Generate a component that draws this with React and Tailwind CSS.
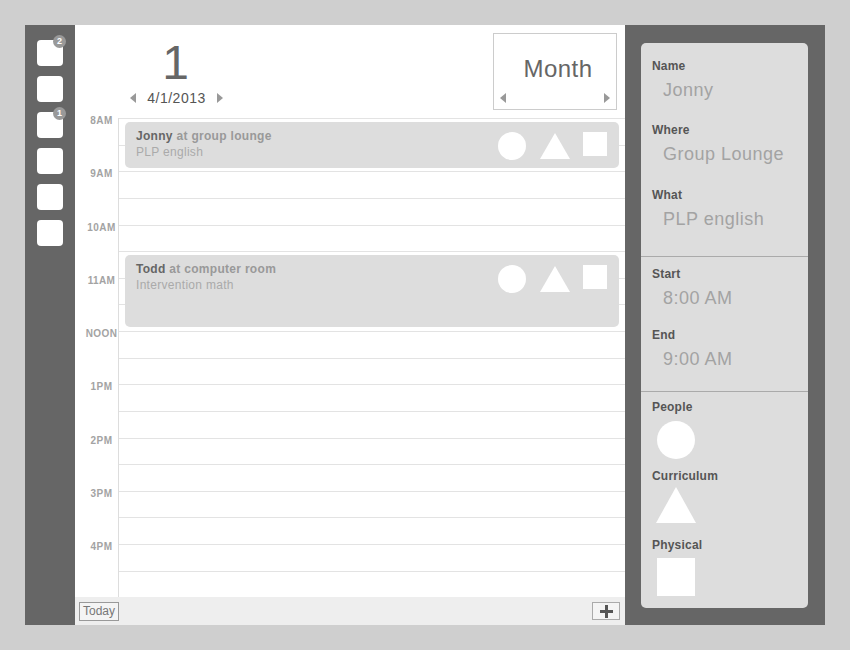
import React from 'react';

const hours = ['8AM', '9AM', '10AM', '11AM', 'NOON', '1PM', '2PM', '3PM', '4PM'];

function Tri({ dir = 'left', className = '' }) {
  return (
    <svg width="6" height="10" viewBox="0 0 6 10" className={className}>
      {dir === 'left'
        ? <polygon points="6,0 6,10 0,5" fill="#999" />
        : <polygon points="0,0 0,10 6,5" fill="#999" />}
    </svg>
  );
}

function Shapes() {
  return (
    <div className="flex items-start">
      <div className="w-[28px] h-[28px] rounded-full bg-white" />
      <svg width="30" height="26" viewBox="0 0 30 26" className="ml-[14px] mt-[1px]">
        <polygon points="15,0 30,26 0,26" fill="#fff" />
      </svg>
      <div className="w-[24px] h-[24px] bg-white ml-[13px]" />
    </div>
  );
}

function Event({ name, where, what, className }) {
  return (
    <div className={`absolute left-[50px] right-[6px] bg-[#dddddd] rounded-[5px] flex justify-between pl-[11px] pr-[12px] ${className}`}>
      <div className="pt-[6px] text-[12px] leading-[16px] tracking-[0.3px]">
        <div className="font-bold text-[#666]">
          {name} <span className="text-[#999]">at {where}</span>
        </div>
        <div className="text-[#aaa]">{what}</div>
      </div>
      <div className="pt-[10px]">
        <Shapes />
      </div>
    </div>
  );
}

function Field({ label, value, className = '' }) {
  return (
    <div className={className}>
      <div className="text-[12px] leading-[14px] font-bold text-[#555] tracking-[0.2px]">{label}</div>
      <div className="mt-[5px] pl-[11px] text-[18px] leading-[24px] text-[#a3a3a3] tracking-[0.5px]">{value}</div>
    </div>
  );
}

export default function App() {
  return (
    <div className="w-[850px] h-[650px] bg-[#cfcfcf] p-[25px]" style={{ fontFamily: '"Liberation Sans", Arial, sans-serif' }}>
      <div className="flex w-[800px] h-[600px]">
        {/* Left bar */}
        <div className="w-[50px] h-full bg-[#666666] flex flex-col items-center pt-[15px] gap-[10px]">
          {[2, 0, 1, 0, 0, 0].map((n, i) => (
            <div key={i} className="relative w-[26px] h-[26px] rounded-[4px] bg-white">
              {n > 0 && (
                <div className="absolute -top-[5px] -right-[3px] w-[13px] h-[13px] rounded-full bg-[#999] text-white text-[9px] leading-[13px] font-bold text-center">
                  {n}
                </div>
              )}
            </div>
          ))}
        </div>

        {/* Main calendar */}
        <div className="w-[550px] h-full bg-white flex flex-col">
          {/* Header */}
          <div className="h-[93px] flex">
            <div className="w-[44px]" />
            <div className="w-[112px] flex flex-col items-center">
              <div className="mt-[14px] ml-[1px] text-[48px] leading-[48px] text-[#666]">1</div>
              <div className="mt-[3px] ml-[3px] flex items-center gap-[11px]">
                <Tri dir="left" />
                <span className="text-[14px] leading-[16px] text-[#555] tracking-[0.5px]">4/1/2013</span>
                <Tri dir="right" />
              </div>
            </div>
            <div className="flex-1" />
            <div className="mt-[8px] mr-[8px] w-[124px] h-[77px] border border-[#cccccc] flex flex-col">
              <div className="pt-[21px] pl-[6px] text-center text-[24px] leading-[28px] text-[#666] tracking-[0.5px]">Month</div>
              <div className="mt-[10px] flex justify-between px-[6px]">
                <Tri dir="left" />
                <Tri dir="right" />
              </div>
            </div>
          </div>

          {/* Grid */}
          <div className="relative flex-1 flex flex-col">
            {hours.map((h) => (
              <div key={h} className="flex h-[53.25px]">
                <div className="w-[44px] border-r border-[#dddddd] relative">
                  <div className="absolute inset-x-0 pl-[10px] -top-[3px] text-center text-[10px] leading-[12px] font-bold text-[#a3a3a3] tracking-[0.4px]">
                    {h}
                  </div>
                </div>
                <div className="flex-1 border-t border-[#e3e3e3] flex flex-col">
                  <div className="flex-1 border-b border-[#e3e3e3]" />
                  <div className="flex-1" />
                </div>
              </div>
            ))}

            <Event name="Jonny" where="group lounge" what="PLP english" className="top-[4px] h-[46px]" />
            <Event name="Todd" where="computer room" what="Intervention math" className="top-[137px] h-[72px]" />
          </div>

          {/* Footer */}
          <div className="h-[27.75px] bg-[#eeeeee] flex items-center justify-between px-[4px]">
            <button className="h-[19px] px-[3px] border border-[#999] bg-[#f4f4f4] text-[12px] leading-[16px] text-[#777]">
              Today
            </button>
            <button className="w-[28px] h-[18px] border border-[#aaa] bg-[#f4f4f4] flex items-center justify-center mr-[1px]">
              <svg width="13" height="13" viewBox="0 0 13 13">
                <rect x="5" y="0" width="3" height="13" fill="#555" />
                <rect x="0" y="5" width="13" height="3" fill="#555" />
              </svg>
            </button>
          </div>
        </div>

        {/* Right panel */}
        <div className="w-[200px] h-full bg-[#666666] pt-[18px] pl-[16px]">
          <div className="w-[167px] h-[565px] bg-[#dddddd] rounded-[5px] flex flex-col">
            <div className="pl-[11px] pt-[16px] pb-[25px]">
              <Field label="Name" value="Jonny" />
              <Field label="Where" value="Group Lounge" className="mt-[21px]" />
              <Field label="What" value="PLP english" className="mt-[22px]" />
            </div>
            <div className="h-px bg-[#aaaaaa]" />
            <div className="pl-[11px] pt-[10px] pb-[20px]">
              <Field label="Start" value="8:00 AM" />
              <Field label="End" value="9:00 AM" className="mt-[18px]" />
            </div>
            <div className="h-px bg-[#aaaaaa]" />
            <div className="pl-[11px] pt-[8px]">
              <div className="text-[12px] leading-[14px] font-bold text-[#555] tracking-[0.2px]">People</div>
              <div className="mt-[7px] ml-[5px] w-[38px] h-[38px] rounded-full bg-white" />
              <div className="mt-[10px] text-[12px] leading-[14px] font-bold text-[#555] tracking-[0.2px]">Curriculum</div>
              <svg width="40" height="36" viewBox="0 0 40 36" className="mt-[4px] ml-[4px]">
                <polygon points="20,0 40,36 0,36" fill="#fff" />
              </svg>
              <div className="mt-[15px] text-[12px] leading-[14px] font-bold text-[#555] tracking-[0.2px]">Physical</div>
              <div className="mt-[6px] ml-[5px] w-[38px] h-[38px] bg-white" />
            </div>
          </div>
        </div>
      </div>
    </div>
  );
}
